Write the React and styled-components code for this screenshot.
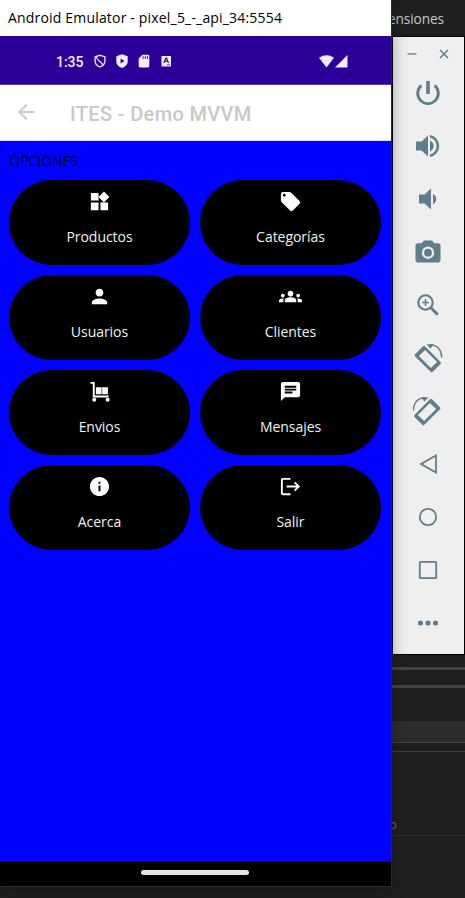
import React from "react";
import styled, { createGlobalStyle } from "styled-components";
import {
  MdWidgets,
  MdLocalOffer,
  MdPerson,
  MdGroups,
  MdInfo,
  MdChat,
  MdLogout,
} from "react-icons/md";

const GlobalStyle = createGlobalStyle`
  * { box-sizing: border-box; }
  body { margin: 0; background: #1e1e1e; overflow: hidden; }
`;

const Desktop = styled.div`
  position: relative;
  width: 465px;
  height: 898px;
  overflow: hidden;
  background: #1f1f1f;
  font-family: "Open Sans", sans-serif;
`;

/* Editor window behind the emulator */
const Editor = styled.div`
  display: flex;
  flex-direction: column;
  height: 898px;
  padding-left: 391px;
`;
const EditorMenu = styled.div`
  height: 667px;
  padding: 9px 21px 0 0;
  text-align: right;
  white-space: nowrap;
  direction: rtl;
  font-size: 13.7px;
  line-height: 20px;
  letter-spacing: -0.1px;
  color: #c8c8c8;
`;
const Rule = styled.div`
  height: ${(p) => p.$size}px;
  margin-bottom: ${(p) => p.$after}px;
  background: ${(p) => p.$color};
`;
const EditorStatus = styled.div`
  height: 21px;
  background: #2d2d2d;
`;
const EditorText = styled.div`
  height: 83px;
  padding: 63px 0 0 0;
  margin-left: -2px;
  font-size: 13px;
  line-height: 18px;
  color: #71685e;
`;

const Phone = styled.div`
  position: absolute;
  left: 0;
  top: 0;
  width: 392px;
  height: 887px;
  display: flex;
  flex-direction: column;
  border-right: 1px solid #292929;
  border-bottom: 1px solid #292929;
  box-shadow: 0 2px 14px rgba(0, 0, 0, 0.35);
`;
const TitleBar = styled.div`
  height: 36px;
  padding-left: 8px;
  background: #fff;
  color: #000;
  font-size: 14px;
  line-height: 36px;
  white-space: nowrap;
  letter-spacing: 0.18px;
`;
const StatusBar = styled.div`
  height: 49px;
  display: flex;
  align-items: center;
  padding: 2px 43px 0 56px;
  background: #2b0098;
  border-bottom: 1px solid #6240b2;
  color: #f2ecfb;
`;
const Clock = styled.span`
  width: 37px;
  padding-top: 1px;
  font: 500 14px/20px Roboto, sans-serif;
  letter-spacing: -0.05px;
`;
const Notifications = styled.div`
  display: flex;
  align-items: center;
  gap: 8px;
  flex: 1;
`;
const Signals = styled.div`
  display: flex;
  gap: 1px;
`;
const AppBar = styled.div`
  height: 56px;
  display: flex;
  align-items: center;
  padding-left: 14px;
  background: #fff;
  border-bottom: 1px solid #dcdcff;
  color: #c9c9c9;

  svg {
    margin-bottom: 1px;
  }
`;
const AppTitle = styled.h1`
  margin: 3px 0 0 32px;
  font: 500 20px/26px Roboto, sans-serif;
  letter-spacing: 0.35px;
`;
const Screen = styled.main`
  flex: 1;
  padding: 10px 10px 0 9px;
  background: #0000ff;
`;
const Heading = styled.div`
  height: 29px;
  font-size: 14px;
  line-height: 20px;
  color: #00002c;
`;
const Grid = styled.div`
  display: grid;
  grid-template-columns: 181px 181px;
  grid-auto-rows: 85px;
  gap: 10px;
`;
const OptionButton = styled.button`
  display: flex;
  flex-direction: column;
  align-items: center;
  padding: 10px 0 0;
  border: 0;
  border-radius: 43px;
  background: #000;
  color: #fff;
`;
const OptionLabel = styled.span`
  margin-top: 14px;
  font: 400 14px/20px "Open Sans", sans-serif;
  letter-spacing: -0.04px;
  color: #f2f2f2;
`;
const NavBar = styled.div`
  height: 25px;
  display: flex;
  justify-content: center;
  padding-top: 9px;
  background: #000;
`;
const Handle = styled.div`
  width: 108px;
  height: 5px;
  margin-left: -2px;
  border-radius: 3px;
  background: #e4e4e4;
`;

const Toolbar = styled.aside`
  position: absolute;
  left: 392px;
  top: 36px;
  width: 73px;
  height: 619px;
  display: flex;
  flex-direction: column;
  border: 1px solid #000;
  background: #efefef;
  color: #607d8b;
`;
const WindowButtons = styled.div`
  height: 29px;
  display: flex;
  align-items: center;
  justify-content: space-between;
  padding: 4px 15px 0 14px;
`;
const Tool = styled.div`
  height: 53px;
  display: flex;
  align-items: center;
  justify-content: center;
  padding-right: 1px;
`;

const Svg = ({ w = 24, h = w, box = `0 0 ${w} ${h}`, children }) => (
  <svg width={w} height={h} viewBox={box} fill="currentColor">
    {children}
  </svg>
);

const CartIcon = () => (
  <Svg w={23} box="0 0 24 24">
    <path d="M2.5 2H7V16.200h14.500v2H5V4H2.500z" />
    <path d="M8.200 7.600h6v7.200h-6zM14.800 7.600h6v7.200h-6z" />
    <circle cx="6.500" cy="20.600" r="2.100" />
    <circle cx="20.500" cy="20.600" r="2.100" />
  </Svg>
);

const options = [
  ["Productos", <MdWidgets size={23} />],
  ["Categorías", <MdLocalOffer size={23} />],
  ["Usuarios", <MdPerson size={23} />],
  ["Clientes", <MdGroups size={23} />],
  ["Envios", <CartIcon />],
  ["Mensajes", <MdChat size={23} />],
  ["Acerca", <MdInfo size={23} />],
  ["Salir", <MdLogout size={23} />],
];

const RotateShape = () => (
  <>
    <path
      fillRule="evenodd"
      d="M2 11.300L10 3.300q1-1 2 0L27.500 18.900q1 1 0 2L19.700 28.700q-1 1-2 0L2 13.300q-1-1 0-2zM12.100 6.900L5.900 13.100 17.900 25.100 24.100 18.900z"
    />
    <path d="M17 1.700C23.500 1.500 28.600 6.500 28.600 14.500" fill="none" stroke="currentColor" strokeWidth="1.500" />
    <path d="M13.500 1.400L19.500 .900 20 2.500 17.500 5.500z" />
  </>
);

const tools = [
  <Svg w={26}>
    <path d="M11.200 1h3.600v13h-3.600z" />
    <path
      d="M6.400 5.400A10.300 10.300 0 1 0 19.600 5.400"
      fill="none"
      stroke="currentColor"
      strokeWidth="2.800"
    />
  </Svg>,
  <Svg w={24}>
    <path d="M0 7.500h5.500L12 1.500v21L5.500 16.500H0z" />
    <path d="M14 6.500a6 6 0 0 1 0 11z" />
    <path d="M14 2.300a9.900 9.900 0 0 1 0 19.400" fill="none" stroke="currentColor" strokeWidth="2.600" />
  </Svg>,
  <Svg w={18} h={22}>
    <path d="M0 6.500h5.500L12 .500v21L5.500 15.500H0z" />
    <path d="M14 6a5.500 5.500 0 0 1 0 10z" />
  </Svg>,
  <Svg w={26} h={24}>
    <path
      fillRule="evenodd"
      d="M9 .500h8l2.300 2.700H23c1.500 0 2.500 1 2.500 2.300v14.500c0 1.500-1 2.500-2.500 2.500H3C1.500 22.500 .500 21.500 .500 20V5.500c0-1.300 1-2.300 2.500-2.300h3.700zM13 6.500a6.200 6.200 0 1 0 0 12.400A6.200 6.200 0 0 0 13 6.500z"
    />
    <circle cx="13" cy="12.700" r="3.900" />
  </Svg>,
  <Svg w={24}>
    <g fill="none" stroke="currentColor">
      <circle cx="9.500" cy="9.500" r="7.200" strokeWidth="2.100" />
      <path d="M6 9.500h7M9.500 6v7" strokeWidth="1.500" />
      <path d="M14.800 14.800l7 7" strokeWidth="3" />
    </g>
  </Svg>,
  <Svg w={30}>
    <RotateShape />
  </Svg>,
  <Svg w={30}>
    <g transform="translate(29 0) scale(-1 1)">
      <RotateShape />
    </g>
  </Svg>,
  <Svg w={20}>
    <path d="M18 1.500v17L3 10z" fill="none" stroke="currentColor" strokeWidth="1.800" />
  </Svg>,
  <Svg w={20}>
    <circle cx="10" cy="10" r="8.200" fill="none" stroke="currentColor" strokeWidth="1.800" />
  </Svg>,
  <Svg w={20}>
    <rect x="1.800" y="1.800" width="16.400" height="16.400" rx="1" fill="none" stroke="currentColor" strokeWidth="1.800" />
  </Svg>,
  <Svg w={20} h={6}>
    <circle cx="2.500" cy="3" r="2.600" />
    <circle cx="10" cy="3" r="2.600" />
    <circle cx="17.500" cy="3" r="2.600" />
  </Svg>,
];

export default function App() {
  return (
    <Desktop>
      <GlobalStyle />
      <Editor>
        <EditorMenu>ensiones</EditorMenu>
        <Rule $size={3} $after={15} $color="#444" />
        <Rule $size={3} $after={33} $color="#444" />
        <EditorStatus />
        <Rule $size={1} $after={8} $color="#444" />
        <Rule $size={1} $after={0} $color="#3d3d3d" />
        <EditorText>o</EditorText>
        <Rule $size={1} $after={0} $color="#2e2e2e" />
      </Editor>

      <Toolbar>
        <WindowButtons>
          <Svg w={10} h={10}>
            <path d="M.500 4.300h9v1.300h-9z" />
          </Svg>
          <Svg w={10} h={10}>
            <path d="M1 1l8 8M9 1L1 9" stroke="currentColor" strokeWidth="1.500" />
          </Svg>
        </WindowButtons>
        {tools.map((icon, i) => (
          <Tool key={i}>{icon}</Tool>
        ))}
      </Toolbar>

      <Phone>
        <TitleBar>Android Emulator - pixel_5_-_api_34:5554</TitleBar>
        <StatusBar>
          <Clock>1:35</Clock>
          <Notifications>
            <Svg w={14}>
              <g fill="none" stroke="currentColor" strokeWidth="1.300">
                <path d="M7 1.300L11.900 2.700V7c0 3-2.200 5-4.900 6C4.300 12 2.100 10 2.100 7V2.700z" />
                <path d="M3.500 2.500C3.500 6 5.500 6.500 7.500 8S9.500 10.500 9.800 11.500" />
              </g>
            </Svg>
            <Svg w={14}>
              <path
                fillRule="evenodd"
                d="M7 .200L12.700 2.200V7.300c0 3.600-2.600 5.600-5.700 6.700C3.900 12.900 1.300 10.900 1.300 7.300V2.200zM5.600 4.500v5L9.500 7z"
              />
            </Svg>
            <Svg w={14}>
              <path
                fillRule="evenodd"
                d="M5.500 .800H11q1.300 0 1.300 1.300v10q0 1.300-1.300 1.300H3q-1.300 0-1.300-1.300V4.600zM5.600 2.300v2.500h1V2.300zM7.800 2.300v2.500h1V2.300zM10 2.300v2.500h1V2.300z"
              />
            </Svg>
            <Svg w={14}>
              <path
                fillRule="evenodd"
                d="M2.500 2h9.500v10.500H2.500zM6.500 3.500L4.300 9h1.300l.4-1.200h2.400l.4 1.200h1.300L7.900 3.500zM7.200 5l.8 1.800H6.400zM8 10.500v.8h3v-.8z"
              />
            </Svg>
          </Notifications>
          <Signals>
            <Svg w={15} h={13}>
              <path d="M0 2.700Q7.500-2 15 2.700L7.500 12.500z" />
            </Svg>
            <Svg w={13}>
              <path d="M12.500 0v12.500H0z" />
            </Svg>
          </Signals>
        </StatusBar>
        <AppBar>
          <Svg w={24}>
            <path d="M20 11H7.830l5.590-5.590L12 4l-8 8 8 8 1.410-1.410L7.830 13H20z" />
          </Svg>
          <AppTitle>ITES - Demo MVVM</AppTitle>
        </AppBar>
        <Screen>
          <Heading>OPCIONES</Heading>
          <Grid>
            {options.map(([label, icon]) => (
              <OptionButton key={label}>
                {icon}
                <OptionLabel>{label}</OptionLabel>
              </OptionButton>
            ))}
          </Grid>
        </Screen>
        <NavBar>
          <Handle />
        </NavBar>
      </Phone>
    </Desktop>
  );
}
